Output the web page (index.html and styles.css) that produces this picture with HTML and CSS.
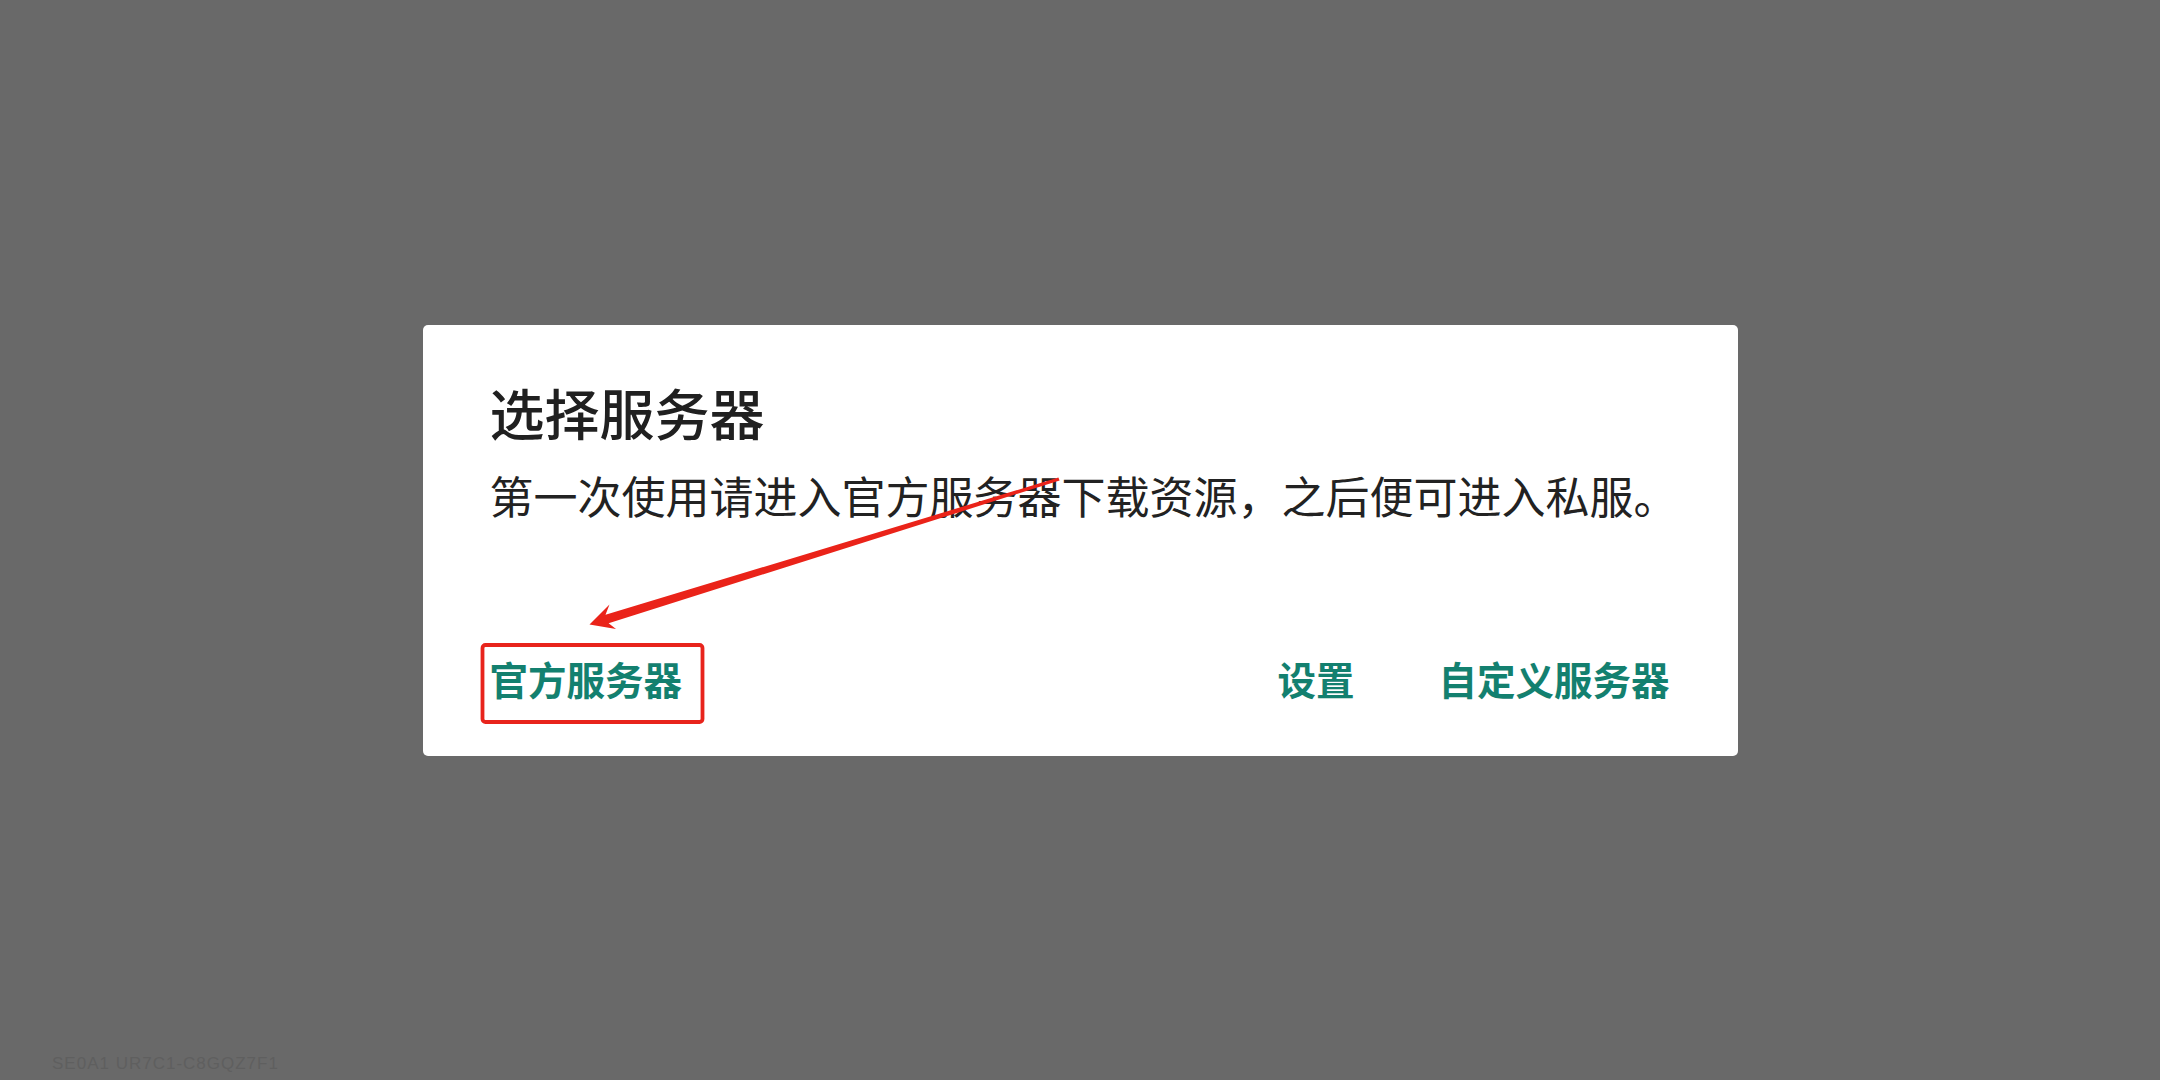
FILE: index.html
```html
<!DOCTYPE html>
<html lang="zh-CN">
<head>
<meta charset="utf-8">
<title>选择服务器</title>
<link rel="stylesheet" href="styles.css">
</head>
<body>
<div class="screen">
  <div class="dialog">
    <h1 class="dialog-title">选择服务器</h1>
    <p class="dialog-message">第一次使用请进入官方服务器下载资源，之后便可进入私服。</p>
    <div class="dialog-actions">
      <span class="btn">官方服务器</span>
      <span class="spacer"></span>
      <span class="btn">设置</span>
      <span class="btn btn-last">自定义服务器</span>
    </div>
  </div>
  <svg class="annotation" width="2160" height="1080" viewBox="0 0 2160 1080">
    <rect x="482.5" y="645" width="220" height="77" rx="3" ry="3" fill="none" stroke="#e8241c" stroke-width="3.8"/>
    <polygon fill="#ea2319" points="589.5,624.5 609.5,604.5 605.5,614.8 1058.4,477.6 1059.6,480.4 608.6,623.3 616,629"/>
  </svg>
  <div class="watermark">SE0A1 UR7C1-C8GQZ7F1</div>
</div>
</body>
</html>
```

FILE: styles.css
```css
html, body {
  margin: 0;
  padding: 0;
}
body {
  background: #696969;
  font-family: "Noto Sans CJK SC", "Noto Sans", sans-serif;
}
.screen {
  position: relative;
  width: 2160px;
  height: 1080px;
  display: flex;
  align-items: center;
  justify-content: center;
  overflow: hidden;
}
.dialog {
  width: 1315px;
  box-sizing: border-box;
  background: #ffffff;
  border-radius: 5px;
  padding: 53px 68px 55px 67px;
}
.dialog-title {
  margin: 0;
  font-size: 55px;
  line-height: 66px;
  font-weight: 500;
  color: #202020;
}
.dialog-message {
  margin: 18px 0 0 0;
  font-size: 44px;
  line-height: 66px;
  font-weight: 400;
  color: #222222;
  white-space: nowrap;
}
.dialog-actions {
  margin-top: 127px;
  display: flex;
  align-items: center;
}
.btn {
  font-size: 38.5px;
  line-height: 46px;
  font-weight: 700;
  color: #13806f;
  white-space: nowrap;
}
.spacer {
  flex: 1;
}
.btn-last {
  margin-left: 84px;
}
.annotation {
  position: absolute;
  left: 0;
  top: 0;
  pointer-events: none;
}
.watermark {
  position: absolute;
  left: 52px;
  top: 1054px;
  font-family: "Liberation Sans", sans-serif;
  font-size: 17px;
  letter-spacing: 1px;
  color: #5f5f5f;
}
```
